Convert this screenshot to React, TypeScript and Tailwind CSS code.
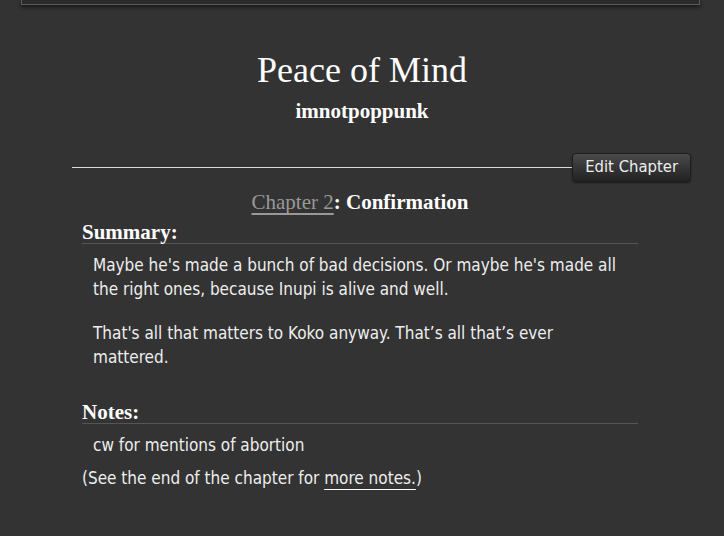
export default function App() {
  return (
    <div className="min-h-[536px] w-full bg-[#333] text-[#eee] font-['DejaVu_Sans_Condensed',sans-serif] overflow-hidden">
      <div className="mx-[21px] w-[679px] h-[6px] -mt-px border border-[#5a5a5a] bg-[#2a2a2a] shadow-[0_2px_4px_rgba(0,0,0,0.6)]" />
      <div className="flex flex-col items-center pt-[45px] font-['Liberation_Serif',serif] text-white">
        <h2 className="text-[36px] leading-[40px]">Peace of Mind</h2>
        <h3 className="mt-[8px] text-[21px] leading-[26px] font-bold">imnotpoppunk</h3>
      </div>
      <div className="mt-[29px] ml-[72px] w-[619px] flex items-center">
        <div className="flex-1 h-px bg-[#ddd]" />
        <button className="h-[29px] px-[12px] rounded-[4px] border border-[#1e1e1e] bg-gradient-to-b from-[#4a4a4a] to-[#222] text-[16.5px] text-[#eee] shadow-[0_1px_2px_rgba(0,0,0,0.5)]">
          Edit Chapter
        </button>
      </div>
      <div className="ml-[82px] w-[556px]">
        <h3 className="mt-[6px] text-center font-['Liberation_Serif',serif] text-[21px] leading-[28px] font-bold text-white">
          <a className="font-normal text-[#999] underline underline-offset-[4px] decoration-[#999]">Chapter 2</a>: Confirmation
        </h3>
        <h3 className="mt-[5px] border-b border-[#555] font-['Liberation_Serif',serif] text-[21px] leading-[22px] font-bold text-white">
          Summary:
        </h3>
        <div className="pl-[11px] pr-[20px] pt-[9px] text-[17px] leading-[24px]">
          <p>Maybe he's made a bunch of bad decisions. Or maybe he's made all the right ones, because Inupi is alive and well.</p>
          <p className="mt-[20px]">That's all that matters to Koko anyway. That’s all that’s ever mattered.</p>
        </div>
        <h3 className="mt-[32px] border-b border-[#555] font-['Liberation_Serif',serif] text-[21px] leading-[22px] font-bold text-white">
          Notes:
        </h3>
        <div className="pl-[11px] pt-[9px] text-[17px] leading-[24px]">
          <p>cw for mentions of abortion</p>
        </div>
        <p className="mt-[9px] text-[17px] leading-[24px]">
          (See the end of the chapter for <a className="underline underline-offset-[5px] decoration-white">more notes.</a>)
        </p>
      </div>
    </div>
  );
}
